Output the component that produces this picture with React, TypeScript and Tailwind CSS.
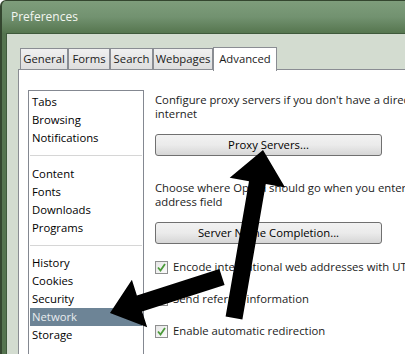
import React from "react";

const tabs: [string, string][] = [
  ["General", "w-[48px]"],
  ["Forms", "w-[42px]"],
  ["Search", "w-[43px]"],
  ["Webpages", "w-[60px]"],
];

const groups: string[][] = [
  ["Tabs", "Browsing", "Notifications"],
  ["Content", "Fonts", "Downloads", "Programs"],
  ["History", "Cookies", "Security", "Network", "Storage"],
];

function CheckBox() {
  return (
    <div className="w-[13px] h-[13px] border border-[#8e8f8f] bg-gradient-to-br from-[#e6e6e6] to-[#fbfbfb] flex items-center justify-center shrink-0">
      <svg width="9" height="9" viewBox="0 0 9 9">
        <path d="M1 4.5 L3.5 7.5 L8 1" fill="none" stroke="#4b9a3a" strokeWidth="1.8" />
      </svg>
    </div>
  );
}

function Button({ label }: { label: string }) {
  return (
    <div className="w-[227px] h-[22px] rounded-[3px] border border-[#707070] bg-gradient-to-b from-[#f2f2f2] via-[#ebebeb] to-[#d6d6d6] flex items-center justify-center text-black">
      {label}
    </div>
  );
}

export default function App() {
  return (
    <div
      className="relative w-[405px] h-[354px] overflow-hidden bg-[#55744f] border-l-2 border-t border-[#34462f] rounded-tl-[6px] text-[11.3px] text-[#1b1b1b]"
      style={{ fontFamily: '"Open Sans", "Noto Sans", sans-serif' }}
    >
      {/* title bar */}
      <div className="h-[32px] -ml-[2px] pl-[11px] flex items-center bg-gradient-to-b from-[#7e9d7b] via-[#729270] to-[#56764f] text-[12px] text-[#f3f6f1]">
        Preferences
      </div>

      {/* client */}
      <div className="ml-[4px] h-full border-l border-t border-[#3f5a3b] bg-[#d3dcd0] pl-[11px] pt-[11px]">
        <div className="flex items-end h-[24px] pl-[2px]">
          {tabs.map(([t, w]) => (
            <div
              key={t}
              className={`${w} h-[21px] border border-b-0 border-[#8a8d93] bg-gradient-to-b from-[#f0f0f0] to-[#dedede] flex items-center justify-center`}
            >
              {t}
            </div>
          ))}
          <div className="w-[64px] h-[24px] border border-b-0 border-[#8a8d93] bg-white flex items-center justify-center relative top-[1px] -mb-[1px] z-10">
            Advanced
          </div>
        </div>

        <div className="bg-white border-l border-t border-[#8a8d93] h-full pl-[9px] pt-[20px] flex gap-[11px]">
          {/* list box */}
          <div className="w-[116px] h-[280px] border border-[#848891] px-[1px] pt-[2px] text-black shrink-0">
            {groups.map((g, gi) => (
              <div key={gi}>
                {gi > 0 && (
                  <div className={gi === 1 ? "h-[18px] pt-[8px]" : "h-[17px] pt-[8px]"}>
                    <div className="h-px bg-[#d6d6d6]" />
                  </div>
                )}
                {g.map((it) => (
                  <div
                    key={it}
                    className={
                      it === "Network"
                        ? "h-[18px] pl-[2px] flex items-center bg-[#6d8496] text-[#e8ecef]"
                        : "h-[18px] pl-[2px] flex items-center"
                    }
                  >
                    {it}
                  </div>
                ))}
              </div>
            ))}
          </div>

          {/* right column */}
          <div className="pt-[3px] whitespace-nowrap">
            <div className="leading-[14px]">
              <div>Configure proxy servers if you don't have a direct connection to the</div>
              <div>internet</div>
            </div>
            <div className="mt-[13px]">
              <Button label="Proxy Servers..." />
            </div>
            <div className="leading-[14px] mt-[25px]">
              <div>Choose where Opera should go when you enter an incomplete name in the</div>
              <div>address field</div>
            </div>
            <div className="mt-[13px]">
              <Button label="Server Name Completion..." />
            </div>
            <div className="mt-[7px]">
              {["Encode international web addresses with UTF-8", "Send referrer information", "Enable automatic redirection"].map((t) => (
                <div key={t} className="h-[32px] flex items-center gap-[5px]">
                  <CheckBox />
                  <span>{t}</span>
                </div>
              ))}
            </div>
          </div>
        </div>
      </div>

      {/* annotation arrows */}
      <svg className="absolute -left-[2px] -top-[1px] pointer-events-none" width="405" height="354" viewBox="0 0 405 354">
        <polygon
          points="263,150 285.1,187.4 265.8,184.05 242.4,319.45 225.6,316.55 249,181.15 229.7,177.8"
          fill="#000"
        />
        <polygon
          points="110,313 147.2,327.3 142.1,311.6 224.6,285.1 219.4,268.9 136.9,295.4 131.9,279.7"
          fill="#000"
        />
      </svg>
    </div>
  );
}
